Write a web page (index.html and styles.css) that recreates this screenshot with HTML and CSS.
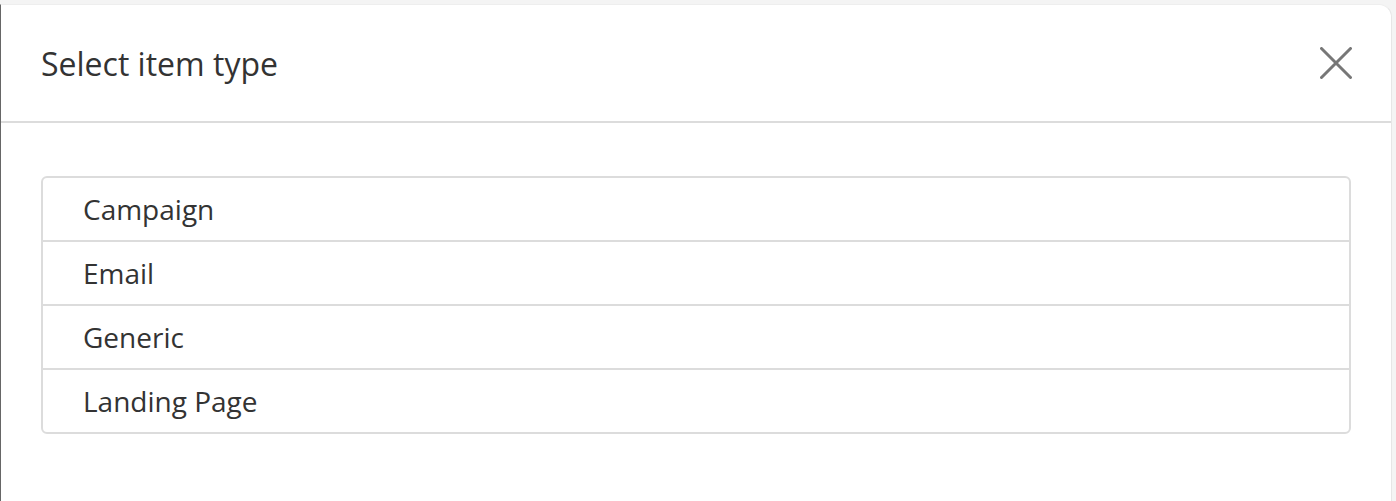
FILE: index.html
```html
<!DOCTYPE html>
<html lang="en">
<head>
<meta charset="utf-8">
<title>Select item type</title>
<link rel="stylesheet" href="styles.css">
</head>
<body>
<div class="modal">
  <div class="modal-header">
    <h2 class="modal-title">Select item type</h2>
    <button class="close-btn" aria-label="Close">
      <svg width="32" height="32" viewBox="0 0 32 32"><path d="M1.5 1.5 L30.5 30.5 M30.5 1.5 L1.5 30.5" stroke="#777" stroke-width="3" stroke-linecap="round" fill="none"/></svg>
    </button>
  </div>
  <div class="modal-body">
    <ul class="type-list">
      <li class="type-item">Campaign</li>
      <li class="type-item">Email</li>
      <li class="type-item">Generic</li>
      <li class="type-item">Landing Page</li>
    </ul>
  </div>
</div>
</body>
</html>
```
FILE: styles.css
```css
html, body {
  margin: 0;
  padding: 0;
  height: 100%;
}
body {
  background: #f4f4f4;
  font-family: "Open Sans", "Liberation Sans", sans-serif;
  color: #333;
  overflow: hidden;
}
.modal {
  margin-top: 4px;
  width: 1392px;
  height: 520px;
  background: #fff;
  border-left: 1px solid #666;
  border-right: 1px solid #e6e6e6;
  border-top: 1px solid #eee;
  border-top-right-radius: 13px;
  box-sizing: border-box;
}
.modal-header {
  height: 118px;
  box-sizing: border-box;
  border-bottom: 2px solid #dcdcdc;
  display: flex;
  align-items: center;
  justify-content: space-between;
  padding: 0 39px 0 40px;
}
.modal-title {
  margin: 0;
  font-weight: 400;
  font-size: 32px;
  color: #333;
}
.close-btn {
  background: none;
  border: 0;
  padding: 0;
  width: 32px;
  height: 32px;
  display: flex;
  cursor: pointer;
}
.modal-body {
  padding: 53px 40px 0 40px;
}
.type-list {
  list-style: none;
  margin: 0;
  padding: 0;
  border: 2px solid #dcdcdc;
  border-radius: 6px;
}
.type-item {
  height: 62px;
  display: flex;
  align-items: center;
  padding-left: 40px;
  font-size: 28px;
  color: #333;
  border-top: 2px solid #dcdcdc;
}
.type-item:first-child {
  border-top: 0;
}
```
